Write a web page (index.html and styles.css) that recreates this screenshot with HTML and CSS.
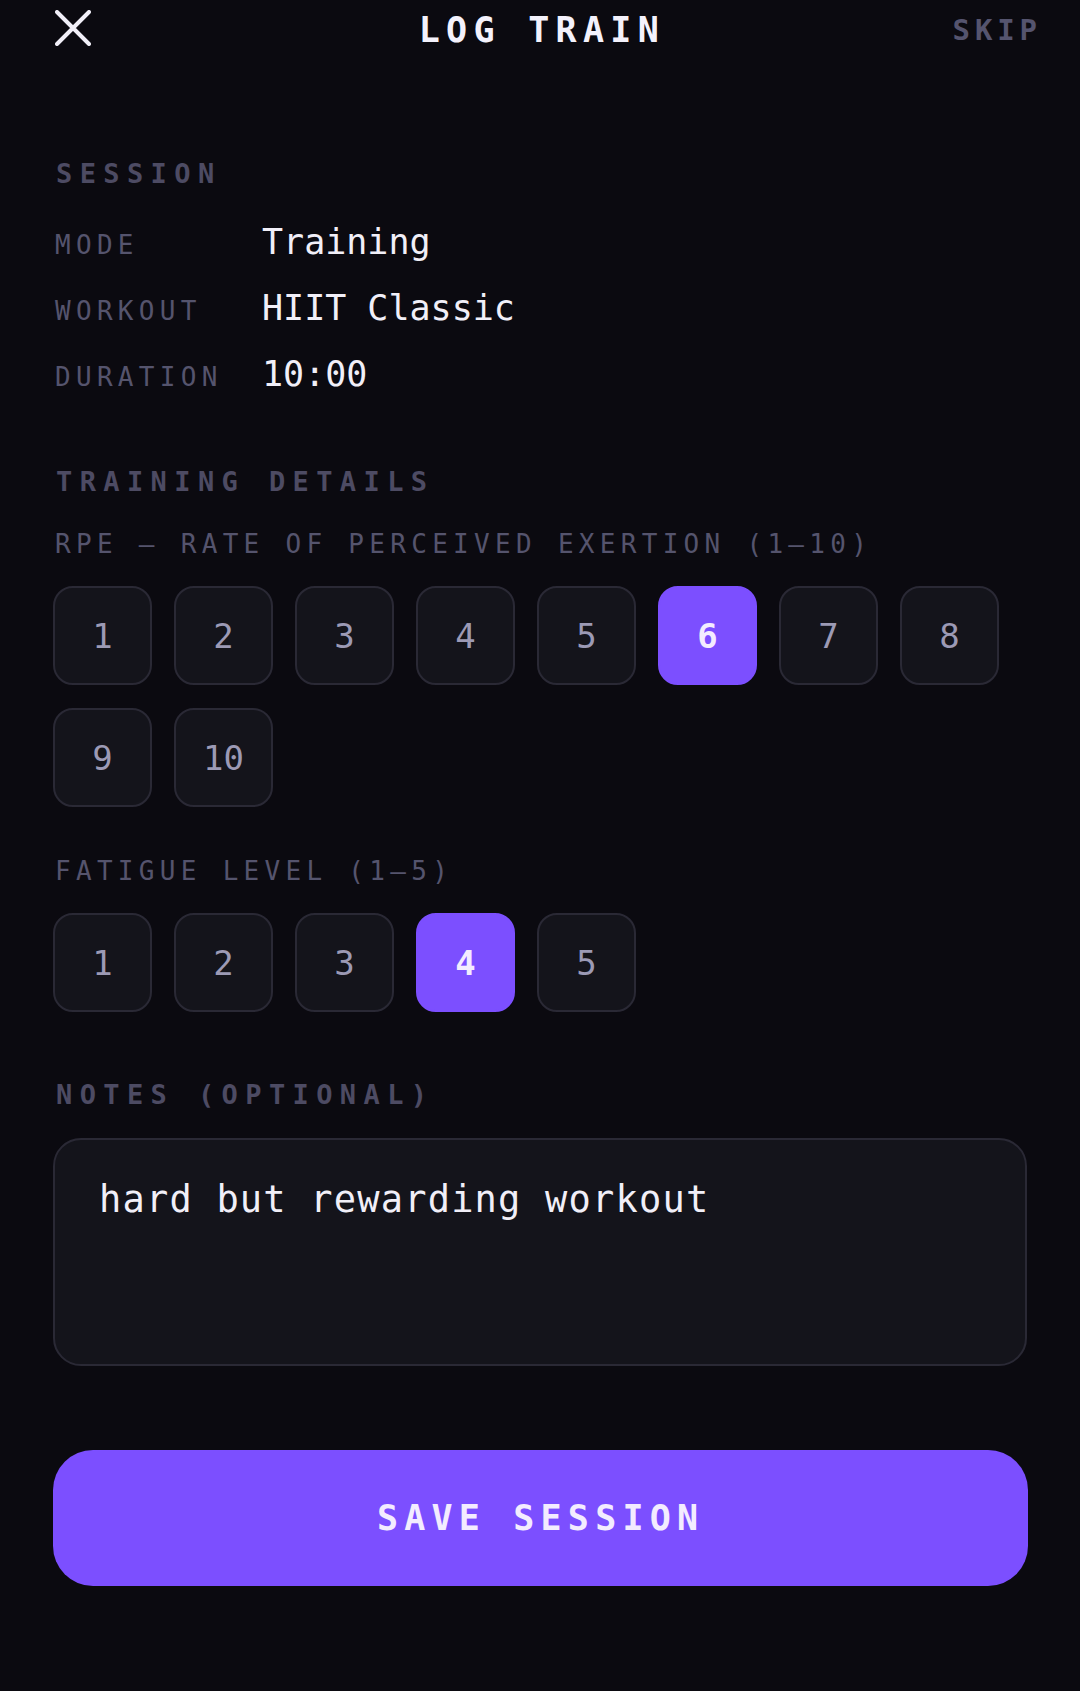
FILE: index.html
```html
<!DOCTYPE html>
<html lang="en">

<head>
    <meta charset="UTF-8">
    <meta name="viewport" content="width=device-width, initial-scale=1.0">
    <title>Log Train</title>
    <link rel="stylesheet" href="styles.css">
</head>

<body>
    <header class="top-bar">
        <button class="close-button" aria-label="Close">
            <svg viewBox="0 0 36 36" width="36" height="36">
                <path d="M2 2 L34 34 M34 2 L2 34" stroke="#f1eff8" stroke-width="4" stroke-linecap="round" />
            </svg>
        </button>
        <div class="top-title">LOG TRAIN</div>
        <a class="skip-link" href="">SKIP</a>
    </header>

    <main class="page">
        <section class="session">
            <h2 class="section-title">SESSION</h2>
            <div class="info-list">
                <div class="info-row">
                    <span class="info-label">MODE</span>
                    <span class="info-value">Training</span>
                </div>
                <div class="info-row">
                    <span class="info-label">WORKOUT</span>
                    <span class="info-value">HIIT Classic</span>
                </div>
                <div class="info-row">
                    <span class="info-label">DURATION</span>
                    <span class="info-value">10:00</span>
                </div>
            </div>
        </section>

        <section class="details">
            <h2 class="section-title">TRAINING DETAILS</h2>

            <div class="field-label rpe-label">RPE – RATE OF PERCEIVED EXERTION (1–10)</div>
            <div class="scale" id="rpe-scale"></div>

            <div class="field-label fatigue-label">FATIGUE LEVEL (1–5)</div>
            <div class="scale" id="fatigue-scale"></div>
        </section>

        <section class="notes">
            <h2 class="section-title">NOTES (OPTIONAL)</h2>
            <textarea class="notes-box" spellcheck="false">hard but rewarding workout</textarea>
        </section>

        <button class="save-button">SAVE SESSION</button>
    </main>

    <script>
        // build the number pickers
        function buildScale(id, max, selected) {
            const scale = document.getElementById(id)
            for (let i = 1; i <= max; i++) {
                const btn = document.createElement("button")
                btn.className = "scale-option"
                if (i === selected) btn.classList.add("selected")
                btn.textContent = i
                btn.onclick = () => {
                    scale.querySelectorAll(".scale-option").forEach(b => b.classList.remove("selected"))
                    btn.classList.add("selected")
                }
                scale.appendChild(btn)
            }
        }

        buildScale("rpe-scale", 10, 6)
        buildScale("fatigue-scale", 5, 4)
    </script>
</body>

</html>
```

FILE: styles.css
```css
* {
    box-sizing: border-box;
}

body {
    margin: 0;
    background-color: #0b0a10;
    font-family: "DejaVu Sans Mono", "Liberation Mono", monospace;
    color: #f1eff8;
    min-height: 1691px;
}

button {
    font-family: inherit;
    cursor: pointer;
}

.top-bar {
    display: flex;
    align-items: center;
    justify-content: space-between;
    height: 60px;
    padding: 0 38px 0 55px;
}

.close-button {
    background: none;
    border: none;
    padding: 0;
    width: 36px;
    height: 36px;
    margin-top: -4px;
}

.close-button svg {
    display: block;
}

.top-title {
    font-size: 35px;
    font-weight: bold;
    letter-spacing: 6.3px;
    margin-right: -6.3px;
    color: #f4f2fc;
    margin-left: 34px;
}

.skip-link {
    font-size: 29px;
    font-weight: bold;
    letter-spacing: 4.9px;
    color: #55546e;
    text-decoration: none;
}

.page {
    padding: 0 53px;
}

.section-title {
    margin: 0;
    padding-left: 3px;
    font-size: 27px;
    line-height: 32px;
    font-weight: bold;
    letter-spacing: 7.4px;
    color: #4d4b63;
}

.session {
    padding-top: 98px;
}

.info-list {
    display: flex;
    flex-direction: column;
    gap: 22px;
    margin-top: 30px;
}

.info-row {
    display: flex;
    align-items: baseline;
    height: 44px;
    line-height: 44px;
}

.info-label {
    width: 209px;
    flex-shrink: 0;
    font-size: 26px;
    letter-spacing: 5.3px;
    color: #55546d;
    padding-left: 2px;
}

.info-value {
    font-size: 35px;
    color: #f1eff8;
}

.details {
    margin-top: 70px;
}

.field-label {
    font-size: 26px;
    line-height: 30px;
    letter-spacing: 5.3px;
    color: #55546d;
    padding-left: 2px;
}

.rpe-label {
    margin-top: 31px;
}

.fatigue-label {
    margin-top: 49px;
}

.scale {
    display: flex;
    flex-wrap: wrap;
    column-gap: 22px;
    row-gap: 23px;
    margin-top: 27px;
    max-width: 974px;
}

.scale-option {
    width: 99px;
    height: 99px;
    border: 2px solid #2a2935;
    border-radius: 20px;
    background-color: #14141b;
    color: #9c9ab5;
    font-size: 34px;
    padding: 0;
}

.scale-option.selected {
    border-color: #7c4fff;
    background-color: #7c4fff;
    color: #f3ecff;
    font-weight: bold;
}

.notes {
    margin-top: 67px;
}

.notes-box {
    display: block;
    width: 974px;
    height: 228px;
    margin-top: 27px;
    padding: 38px 44px;
    border: 2px solid #2a2935;
    border-radius: 28px;
    background-color: #14141b;
    color: #f1eff8;
    font-family: inherit;
    font-size: 37px;
    line-height: 44px;
    letter-spacing: 1.2px;
    resize: none;
    outline: none;
    overflow: hidden;
}

.save-button {
    display: block;
    width: 975px;
    height: 136px;
    margin-top: 84px;
    border: none;
    border-radius: 40px;
    background-color: #7c4fff;
    color: #f3ecff;
    font-size: 35px;
    font-weight: bold;
    letter-spacing: 6.2px;
    padding-left: 6.2px;
}
```
